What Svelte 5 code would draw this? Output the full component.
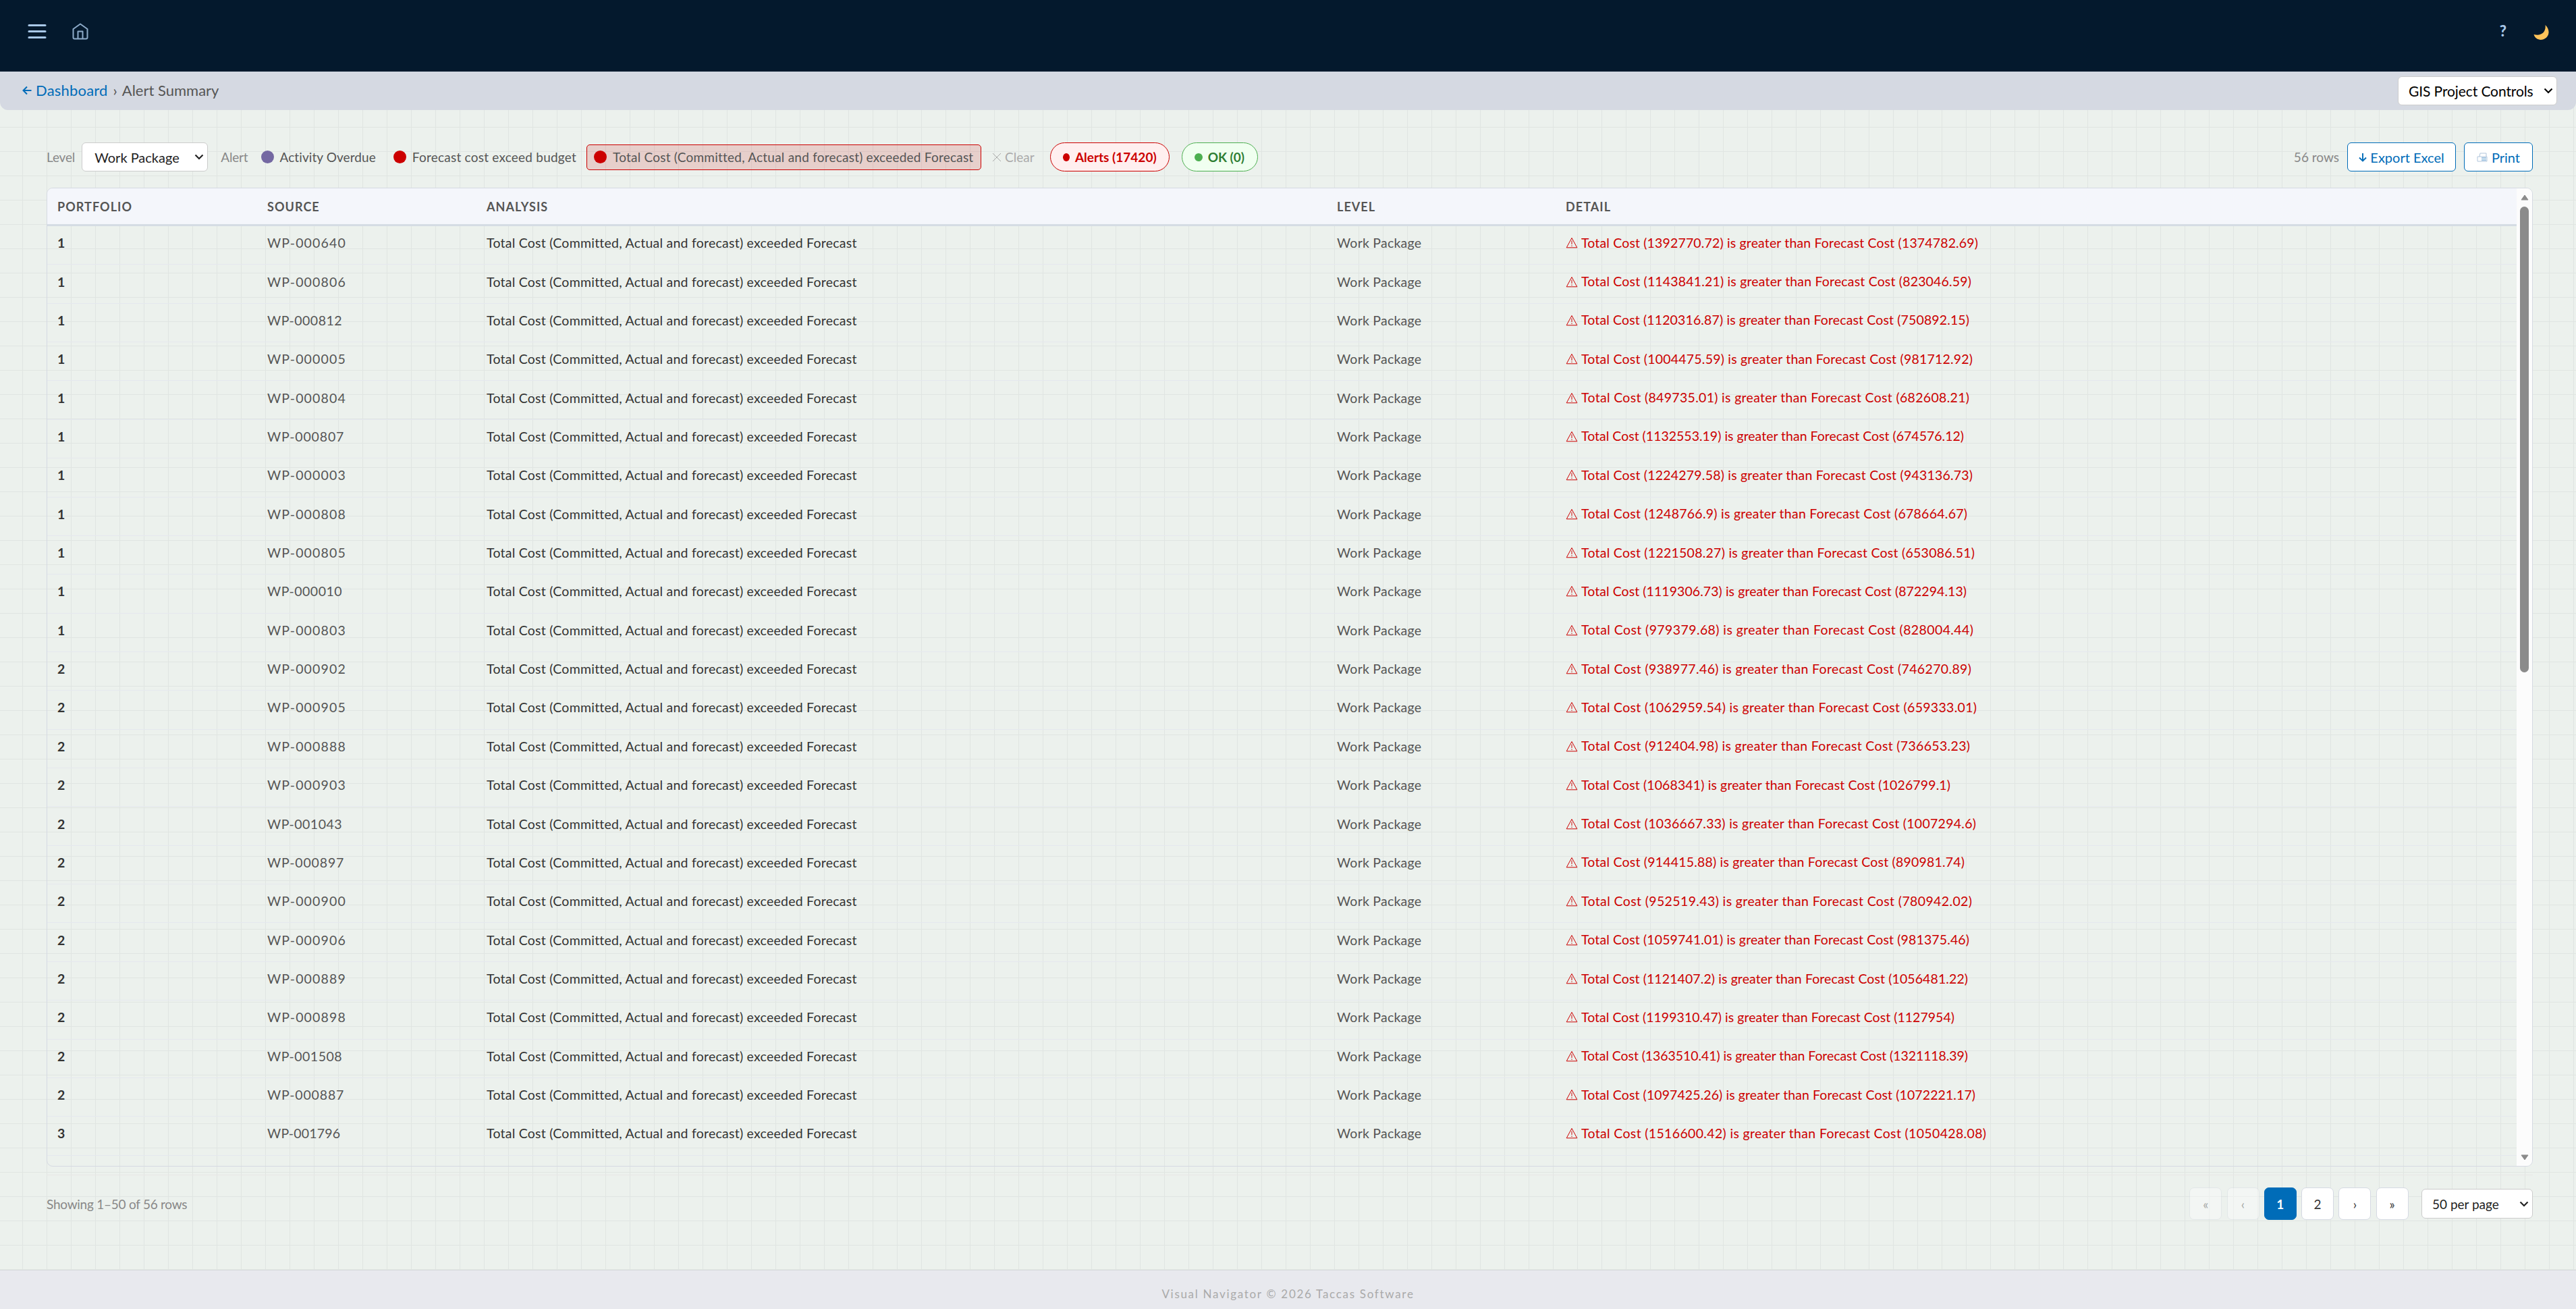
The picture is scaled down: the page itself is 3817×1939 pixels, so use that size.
<script>
  const analysis = 'Total Cost (Committed, Actual and forecast) exceeded Forecast';
  // portfolio, source number, actual cost, forecast cost, detail width
  const rows = [
    [1, '000640', '1392770.72', '1374782.69', 611], [1, '000806', '1143841.21', '823046.59', 601],
    [1, '000812', '1120316.87', '750892.15', 598], [1, '000005', '1004475.59', '981712.92', 603],
    [1, '000804', '849735.01', '682608.21', 598], [1, '000807', '1132553.19', '674576.12', 590],
    [1, '000003', '1224279.58', '943136.73', 603], [1, '000808', '1248766.9', '678664.67', 595],
    [1, '000805', '1221508.27', '653086.51', 606], [1, '000010', '1119306.73', '872294.13', 594],
    [1, '000803', '979379.68', '828004.44', 604], [2, '000902', '938977.46', '746270.89', 601],
    [2, '000905', '1062959.54', '659333.01', 609], [2, '000888', '912404.98', '736653.23', 599],
    [2, '000903', '1068341', '1026799.1', 570], [2, '001043', '1036667.33', '1007294.6', 608],
    [2, '000897', '914415.88', '890981.74', 591], [2, '000900', '952519.43', '780942.02', 602],
    [2, '000906', '1059741.01', '981375.46', 598], [2, '000889', '1121407.2', '1056481.22', 596],
    [2, '000898', '1199310.47', '1127954', 576], [2, '001508', '1363510.41', '1321118.39', 596],
    [2, '000887', '1097425.26', '1072221.17', 607], [3, '001796', '1516600.42', '1050428.08', 623]
  ];
  // narrow digits tighten the tracking of a source code
  const tracking = (s) => {
    const ones = s.split('1').length - 1;
    const sevens = s.split('7').length - 1;
    return (1.15 - ones * 0.65 - sevens * 0.3).toFixed(2);
  };
</script>

{#snippet chevron()}
  <svg class="chev" viewBox="0 0 14 9"><path d="M1.500 1.500 7 7l5.500-5.500" /></svg>
{/snippet}

<div class="page">
  <header>
    <svg class="burger" viewBox="0 0 28 24"><path d="M2 2.500h24M2 11.500h24M2 20.500h24" /></svg>
    <svg class="home" viewBox="0 0 24 26"><path d="M1.500 9 12 1.500 22.500 9v12.500a2 2 0 0 1-2 2h-17a2 2 0 0 1-2-2z M8.500 23.500V12.500h7v11" /></svg>
    <span class="help">?</span>
    <svg class="moon" viewBox="0 0 24 24"><path d="M17.500 1C26 9 23 20 14 22.500C8 24 2 21 .500 15C11 18 19 12 17.500 1Z" /></svg>
  </header>
  <nav>
    <span class="crumb"><b><svg viewBox="0 0 14 14"><path d="M13.500 7H1.500M7 1.500 1.500 7 7 12.500" /></svg>Dashboard</b><em>›</em>Alert Summary</span>
    <div class="select project"><span>GIS Project Controls</span>{@render chevron()}</div>
  </nav>
  <main>
    <div class="toolbar">
      <span class="label">Level</span>
      <div class="select level"><span>Work Package</span>{@render chevron()}</div>
      <span class="label">Alert</span>
      <span class="chip overdue"><i></i>Activity Overdue</span>
      <span class="chip budget"><i></i>Forecast cost exceed budget</span>
      <span class="chip active"><i></i>{analysis}</span>
      <span class="clear"><svg viewBox="0 0 14 14"><path d="M1 1l12 12M13 1 1 13" /></svg>Clear</span>
      <span class="pill red"><i></i>Alerts (17420)</span>
      <span class="pill green"><i></i>OK (0)</span>
      <span class="count">56 rows</span>
      <span class="btn export"><svg viewBox="0 0 12 14"><path d="M6 1v11.500M1 7.500l5 5 5-5" /></svg>Export Excel</span>
      <span class="btn print"><svg viewBox="0 0 16 14"><path class="paper" d="M4 6 5 1h9v5" /><path d="M1 6h14v7H1z" /><path class="tray" d="M7 8h7M7 11h7" /></svg>Print</span>
    </div>
    <div class="table">
      <div class="grid">
        <div class="row head"><span>PORTFOLIO</span><span>SOURCE</span><span>ANALYSIS</span><span>LEVEL</span><span>DETAIL</span></div>
        {#each rows as [p, s, a, b, w]}
          <div class="row">
            <strong>{p}</strong><span class="muted" style="letter-spacing: {tracking(s)}px">WP-{s}</span><span>{analysis}</span><span class="muted">Work Package</span>
            <span class="detail"><svg class="warn" viewBox="0 0 18 17"><path d="M9 1.500 16.800 15.800H1.200z M9 5.500v5.500M9 12.500v1.500" /></svg><svg class="msg" width={w} height="30"><text x="0" y="22" textLength={w - 23} lengthAdjust="spacing">Total Cost ({a}) is greater than Forecast Cost ({b})</text></svg></span>
          </div>
        {/each}
      </div>
      <div class="scroll"><svg viewBox="0 0 12 9"><path d="M6 1 11 8H1z" /></svg><div class="thumb"></div><svg class="down" viewBox="0 0 12 9"><path d="M1 1h10L6 8z" /></svg></div>
    </div>
    <div class="pager">
      <span class="showing">Showing 1–50 of 56 rows</span>
      <span class="pg off">«</span><span class="pg off">‹</span><span class="pg on">1</span><span class="pg">2</span><span class="pg">›</span><span class="pg">»</span>
      <div class="select per"><span>50 per page</span>{@render chevron()}</div>
    </div>
  </main>
  <footer>Visual Navigator © 2026 Taccas Software</footer>
</div>

<style>
  :global(body) { margin: 0; }
  .page {
    width: 3817px; height: 1939px; overflow: hidden; display: flex; flex-direction: column;
    font-family: Lato, 'Open Sans', sans-serif; font-size: 19px; color: #333; white-space: nowrap;
    background-color: #ecf1ed;
    background-image: linear-gradient(90deg, #e0e5e2 1px, transparent 1px), linear-gradient(#e0e5e2 1px, transparent 1px);
    background-size: 36px 36px; background-position: 33px 8px;
  }
  * { box-sizing: border-box; }
  svg { display: block; flex: none; fill: none; stroke: currentColor; }
  header { height: 106px; background: #04192d; display: flex; align-items: flex-start; padding: 35px 39px 0 41px; color: #a9c8e8; }
  .burger { width: 28px; height: 24px; stroke-width: 3.200; stroke-linecap: round; }
  .home { width: 24px; height: 26px; margin: -1px 0 0 38px; stroke-width: 2; stroke-linejoin: round; color: #8dabc9; }
  .help { margin-left: auto; font-weight: 900; font-size: 22px; line-height: 22px; }
  .moon { width: 24px; height: 24px; margin: 1px 0 0 40px; fill: #ffc35a; stroke: none; }
  nav { height: 57px; background: #d5d9e2; border-radius: 0 0 12px 12px; display: flex; align-items: center; justify-content: space-between; padding: 0 28px 0 33px; font-size: 22px; color: #555; }
  .crumb { display: flex; align-items: center; padding-bottom: 2px; }
  .crumb b { display: flex; align-items: center; color: #006cb8; font-weight: 400; letter-spacing: .2px; }
  .crumb svg { width: 14px; height: 14px; margin-right: 6px; stroke-width: 2; }
  .crumb em { font-style: normal; margin: 0 7px 0 8px; }
  .select { display: flex; align-items: center; justify-content: space-between; height: 43px; background: #fff; border: 1px solid #ccc; border-radius: 6px; padding: 0 5px 0 15px; color: #222; }
  .chev { width: 14px; height: 9px; stroke-width: 2.200; }
  .project { width: 236px; font-size: 21px; letter-spacing: -.1px; color: #000; }
  main { flex: 1; padding: 48px 64px 0 69px; display: flex; flex-direction: column; }
  .toolbar { display: flex; align-items: center; height: 43px; margin-bottom: 24px; color: #555; }
  .label, .count { color: #888; }
  .label { letter-spacing: -.15px; }
  .level { width: 187px; margin: 0 19px 0 10px; font-size: 20px; padding-left: 18px; }
  .chip { display: flex; align-items: center; height: 38px; letter-spacing: .23px; }
  .chip i { width: 19px; height: 19px; border-radius: 50%; background: #c00; margin-right: 9px; }
  .overdue { margin-left: 19px; letter-spacing: .08px; }
  .overdue i { background: #7468a2; }
  .budget { margin-left: 26px; }
  .active { margin-left: 15px; padding: 0 10px; width: 585px; border: 1px solid #c00; border-radius: 5px; background: rgba(204, 0, 0, .14); }
  .clear { display: flex; align-items: center; color: #aaa; margin-left: 16px; }
  .clear svg { width: 14px; height: 14px; margin-right: 5px; }
  .pill { display: flex; align-items: center; height: 43px; border: 1px solid #c00; border-radius: 22px; background: #ffefef; color: #c00; font-weight: 700; padding: 0 18px; width: 177px; margin-left: 23px; }
  .pill i { width: 12px; height: 12px; border-radius: 50%; background: currentColor; margin-right: 8px; }
  .green { color: #2e7d32; background: #f0fff0; border-color: #4caf50; width: 113px; margin-left: 18px; }
  .green i { background: #4caf50; }
  .count { margin-left: auto; margin-right: 12px; }
  .btn { display: flex; align-items: center; justify-content: center; height: 43px; border: 1px solid #006cb8; border-radius: 6px; background: #fff; color: #006cb8; font-size: 20px; }
  .export { width: 161px; }
  .export svg { width: 12px; height: 14px; margin-right: 5px; stroke-width: 1.900; }
  .print { width: 102px; margin-left: 12px; }
  .print svg { width: 16px; height: 14px; margin-right: 6px; color: #b0c5dc; }
  .print .tray { stroke: #468cc5; }
  .table { display: flex; height: 1450px; border: 1px solid #d5d9e2; border-radius: 9px; overflow: hidden; }
  .grid { flex: 1; }
  .row { display: grid; grid-template-columns: 311px 325px 1260px 339px 1fr; align-items: center; height: 57.360px; padding: 0 0 7px 15px; border-bottom: 1px solid #e5e8ee; font-size: 19.500px; letter-spacing: .24px; }
  .head { height: 56px; padding-bottom: 0; background: #f4f6fb; border-bottom: 3px solid #d5dce4; font-weight: 700; color: #555; font-size: 18px; letter-spacing: 1.050px; }
  .muted { color: #555; }
  .detail { display: flex; align-items: center; color: #c00; }
  .warn { width: 18px; height: 17px; margin-right: 5px; }
  .msg { stroke: none; fill: #c00; letter-spacing: 0; }
  .scroll { width: 23px; background: #fcfcfc; display: flex; flex-direction: column; align-items: center; padding: 9px 0 8px; }
  .scroll svg { width: 12px; height: 9px; fill: #8b8b8b; stroke: #8b8b8b; stroke-linejoin: round; }
  .thumb { width: 13px; height: 690px; background: #8b8b8b; border-radius: 7px; margin-top: 9px; }
  .scroll .down { margin-top: auto; }
  .pager { display: flex; align-items: center; margin-top: 12px; border-top: 1px solid #e8e6e4; padding-top: 18px; height: 67px; }
  .showing { color: #888; margin-right: auto; letter-spacing: -.25px; }
  .pg { width: 48px; height: 48px; display: grid; place-items: center; background: #fff; border: 1px solid #d5d9e2; border-radius: 7px; margin-right: 7.300px; }
  .off { opacity: .4; }
  .on { background: #006cb8; border-color: #006cb8; color: #fff; font-weight: 700; }
  .per { width: 165px; height: 44px; margin-left: 12px; }
  footer { height: 58px; border-top: 1px solid #d8dadd; background: #e8e9ee; display: grid; place-items: center; color: #aaa; font-size: 17px; letter-spacing: 1.700px; padding-top: 12px; }
</style>
